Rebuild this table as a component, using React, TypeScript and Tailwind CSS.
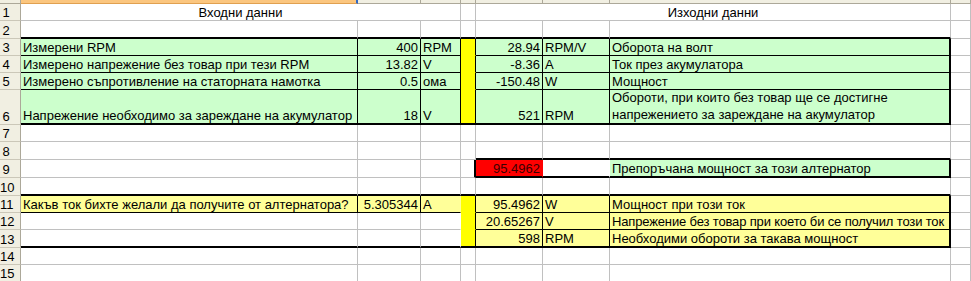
import type { ReactNode } from "react";

type Line = "g" | "k" | "K" | "n";
type Cell = {
  t?: ReactNode;
  bg?: string;
  r?: Line;
  b?: Line;
  al?: "l" | "r" | "c";
  span?: number;
  cls?: string;
};

const RIGHT: Record<Line, string> = {
  g: "border-r border-r-[#c0c0c0]",
  k: "border-r border-r-black",
  K: "border-r-2 border-r-black",
  n: "border-r border-r-transparent",
};
const BOTTOM: Record<Line, string> = {
  g: "border-b border-b-[#c0c0c0]",
  k: "border-b border-b-black",
  K: "border-b-2 border-b-black",
  n: "border-b border-b-transparent",
};
const ALIGN = {
  l: "justify-start pl-[2px]",
  r: "justify-end pr-[2px]",
  c: "justify-center",
};

const GREEN = "bg-[#ccffcc]";
const YELLOW = "bg-[#ffff00]";
const LIGHT = "bg-[#ffff99]";
const RED = "bg-[#ff0000]";

const blank = (b: Line = "g", r: Line = "g"): Cell => ({ r, b });

const inputs: [string, string, string, string, string, ReactNode][] = [
  ["Измерени RPM", "400", "RPM", "28.94", "RPM/V", "Оборота на волт"],
  ["Измерено напрежение без товар при тези RPM", "13.82", "V", "-8.36", "A", "Ток през акумулатора"],
  ["Измерено съпротивление на статорната намотка", "0.5", "ома", "-150.48", "W", "Мощност"],
  [
    "Напрежение необходимо за зареждане на акумулатор",
    "18",
    "V",
    "521",
    "RPM",
    <span className="leading-[17px]">
      Обороти, при които без товар ще се достигне
      <br />
      напрежението за зареждане на акумулатор
    </span>,
  ],
];

const outputs: [string, string, string][] = [
  ["95.4962", "W", "Мощност при този ток"],
  ["20.65267", "V", "Напрежение без товар при което би се получил този ток"],
  ["598", "RPM", "Необходими обороти за такава мощност"],
];

function buildRows(): Cell[][] {
  const rows: Cell[][] = [];
  // 1
  rows.push([
    { t: "Входни данни", al: "c", span: 3, r: "g", b: "g" },
    blank(),
    { t: "Изходни данни", al: "c", span: 3, r: "g", b: "g" },
    blank(),
  ]);
  // 2
  rows.push([blank("K"), blank("K"), blank("K"), blank("K"), blank("K"), blank("K"), blank("K"), blank()]);
  // 3-6
  inputs.forEach((row, i) => {
    const last = i === inputs.length - 1;
    const b: Line = last ? "K" : "k";
    rows.push([
      { t: row[0], bg: GREEN, r: "k", b, al: "l" },
      { t: row[1], bg: GREEN, r: "k", b, al: "r" },
      { t: row[2], bg: GREEN, r: "k", b, al: "l" },
      { bg: YELLOW, r: "k", b: last ? "K" : "n" },
      { t: row[3], bg: GREEN, r: "k", b, al: "r" },
      { t: row[4], bg: GREEN, r: "k", b, al: "l" },
      { t: row[5], bg: GREEN, r: "K", b, al: "l" },
      blank(),
    ]);
  });
  // 7
  rows.push([blank(), blank(), blank(), blank(), blank(), blank(), blank(), blank()]);
  // 8
  rows.push([blank(), blank(), blank(), blank(), blank("K"), blank("K"), blank("K"), blank()]);
  // 9
  rows.push([
    blank(),
    blank(),
    blank(),
    blank("g", "K"),
    { t: "95.4962", bg: RED, r: "n", b: "K", al: "r", cls: "text-[#3a0000]" },
    { bg: "bg-white", r: "n", b: "K" },
    { t: "Препоръчана мощност за този алтернатор", bg: GREEN, r: "K", b: "K", al: "l" },
    blank(),
  ]);
  // 10
  rows.push([blank("K"), blank("K"), blank("K"), blank("K"), blank("K"), blank("K"), blank("K"), blank()]);
  // 11-13
  outputs.forEach((row, i) => {
    const last = i === outputs.length - 1;
    const b: Line = last ? "K" : "k";
    const left: Cell[] =
      i === 0
        ? [
            { t: "Какъв ток бихте желали да получите от алтернатора?", bg: LIGHT, r: "k", b: "k", al: "l" },
            { t: "5.305344", bg: LIGHT, r: "k", b: "k", al: "r" },
            { t: "A", bg: LIGHT, r: "n", b: "k", al: "l" },
          ]
        : [blank(last ? "K" : "g"), blank(last ? "K" : "g"), blank(last ? "K" : "g", "n")];
    rows.push([
      ...left,
      { bg: YELLOW, r: "k", b: last ? "K" : "n" },
      { t: row[0], bg: LIGHT, r: "k", b, al: "r" },
      { t: row[1], bg: LIGHT, r: "k", b, al: "l" },
      { t: row[2], bg: LIGHT, r: "K", b, al: "l", cls: i === 1 ? "tracking-[-0.15px]" : "" },
      blank(),
    ]);
  });
  // 14-15
  for (let i = 0; i < 2; i++) {
    rows.push([blank(), blank(), blank(), blank(), blank(), blank(), blank(), blank()]);
  }
  return rows;
}

const SPAN: Record<number, string> = { 1: "", 3: "col-span-3" };

function SheetCell({ c }: { c: Cell }) {
  return (
    <div
      className={`flex items-end overflow-hidden whitespace-nowrap leading-[15px] ${SPAN[c.span ?? 1]} ${
        c.bg ?? ""
      } ${RIGHT[c.r ?? "g"]} ${BOTTOM[c.b ?? "g"]} ${ALIGN[c.al ?? "l"]} ${c.cls ?? ""}`}
    >
      {c.t}
    </div>
  );
}

export default function App() {
  const rows = buildRows();
  const heads = ["A", "B", "C", "D", "E", "F", "G", "H"];

  return (
    <div className="h-[281px] w-[971px] overflow-hidden bg-white font-['Liberation_Sans',Arial,sans-serif] text-[13px] text-black">
      <div className="grid grid-cols-[21px_337px_63px_40px_15px_67px_67px_341px_1fr] grid-rows-[4px_17px_18px_17px_17px_17px_35px_17px_18px_18px_18px_17px_17px_18px_17px_17px]">
        {/* column header strip */}
        <div className="border-r border-b border-r-[#aca899] border-b-[#aca899] bg-[#f1efe2]" />
        {heads.map((h) =>
          h === "A" ? (
            <div key={h} className="border-r-2 border-b border-r-[#316ac5] border-b-[#e0a050] bg-[#fbc67f]" />
          ) : (
            <div key={h} className="border-r border-b border-r-[#aca899] border-b-[#aca899] bg-[#f1efe2]" />
          )
        )}

        {rows.map((cells, i) => (
          <div key={i} className="contents">
            <div className="flex items-end border-r border-b border-r-[#aca899] border-b-[#cbc7b8] bg-[#f1efe2] leading-[15px]">
              <span className="w-[12px] text-center">{i + 1}</span>
            </div>
            {cells.map((c, j) => (
              <SheetCell key={j} c={c} />
            ))}
          </div>
        ))}
      </div>
    </div>
  );
}
